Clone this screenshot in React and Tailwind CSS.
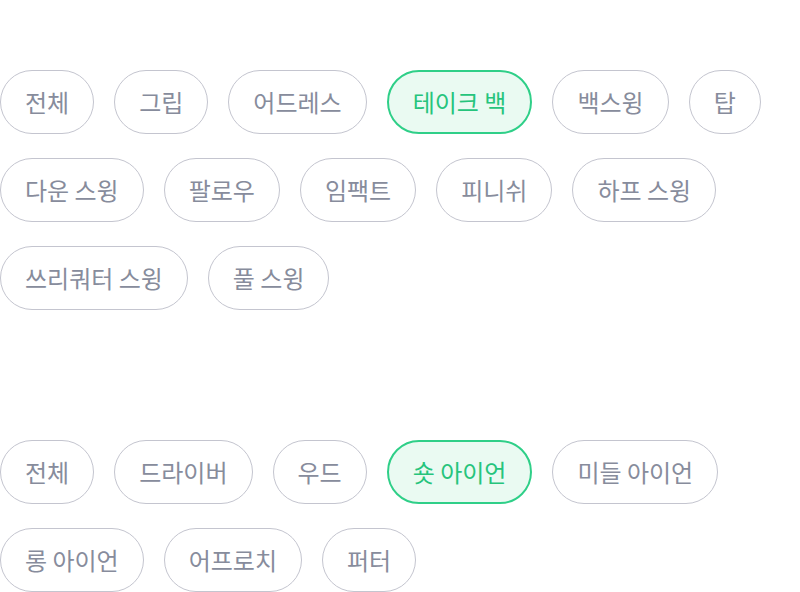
import React from 'react';

const parts = ['전체', '그립', '어드레스', '테이크 백', '백스윙', '탑', '다운 스윙', '팔로우', '임팩트', '피니쉬', '하프 스윙', '쓰리쿼터 스윙', '풀 스윙'];
const clubs = ['전체', '드라이버', '우드', '숏 아이언', '미들 아이언', '롱 아이언', '어프로치', '퍼터'];

function Chip({ label, active }) {
  return (
    <button
      className={
        active
          ? 'h-[64px] px-[24px] rounded-full border-2 border-[#2fcf88] bg-[#eafaf2] text-[#26c47c] text-[24px] font-normal whitespace-nowrap'
          : 'h-[64px] px-[24px] rounded-full border border-[#c4c5cf] bg-white text-[#878c9c] text-[24px] font-normal whitespace-nowrap'
      }
    >
      {label}
    </button>
  );
}

function ChipGroup({ items, active }) {
  return (
    <div className="flex flex-wrap gap-x-[20px] gap-y-[24px]">
      {items.map((item) => (
        <Chip key={item} label={item} active={item === active} />
      ))}
    </div>
  );
}

export default function App() {
  return (
    <div
      className="w-[800px] h-[592px] bg-white overflow-hidden pt-[70px] flex flex-col gap-[130px]"
      style={{ fontFamily: '"Noto Sans CJK KR", "Noto Sans", sans-serif' }}
    >
      <ChipGroup items={parts} active="테이크 백" />
      <ChipGroup items={clubs} active="숏 아이언" />
    </div>
  );
}
